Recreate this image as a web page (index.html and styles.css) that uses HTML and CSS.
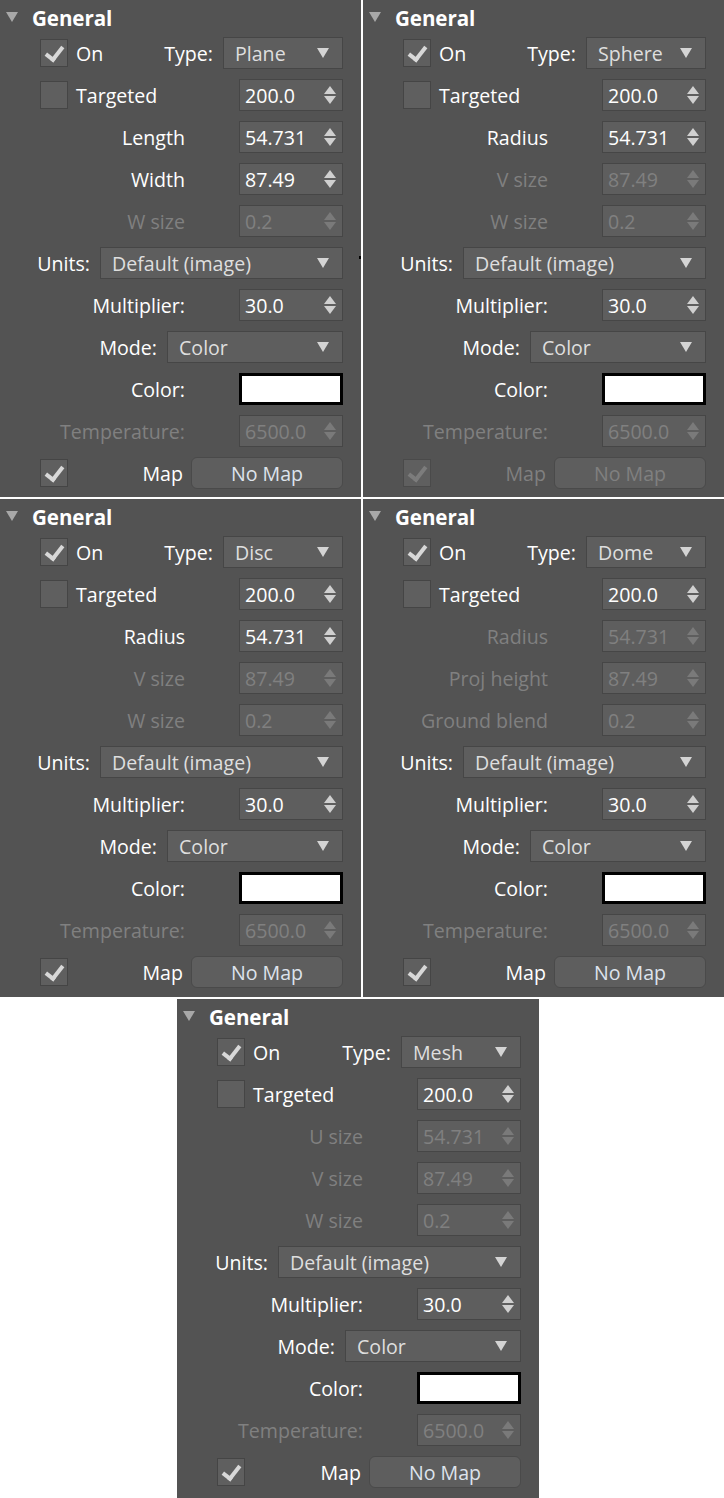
FILE: index.html
```html
<!DOCTYPE html>
<html>
<head>
<meta charset="utf-8">
<link rel="stylesheet" href="styles.css">
</head>
<body>
<div class="sheet">
  <!-- Panel 1: Plane -->
  <section class="panel p1">
    <div class="head"><span class="tri"></span><span class="title">General</span></div>
    <div class="row"><span class="cb on"></span><span class="name">On</span><span class="lbl g-d">Type:</span><span class="dd w-type"><span class="ddt">Plane</span><span class="dda"></span></span></div>
    <div class="row"><span class="cb"></span><span class="name">Targeted</span><span class="sp auto"><span class="spt">200.0</span><span class="spa"></span></span></div>
    <div class="row"><span class="lbl g-s">Length</span><span class="sp"><span class="spt">54.731</span><span class="spa"></span></span></div>
    <div class="row"><span class="lbl g-s">Width</span><span class="sp"><span class="spt">87.49</span><span class="spa"></span></span></div>
    <div class="row dis"><span class="lbl g-s">W size</span><span class="sp"><span class="spt">0.2</span><span class="spa"></span></span></div>
    <div class="row"><span class="lbl g-d">Units:</span><span class="dd w-units"><span class="ddt">Default (image)</span><span class="dda"></span></span></div>
    <div class="row"><span class="lbl g-s">Multiplier:</span><span class="sp"><span class="spt">30.0</span><span class="spa"></span></span></div>
    <div class="row"><span class="lbl g-d">Mode:</span><span class="dd w-mode"><span class="ddt">Color</span><span class="dda"></span></span></div>
    <div class="row"><span class="lbl g-s">Color:</span><span class="sw"></span></div>
    <div class="row dis"><span class="lbl g-s">Temperature:</span><span class="sp"><span class="spt">6500.0</span><span class="spa"></span></span></div>
    <div class="row"><span class="cb on"></span><span class="lbl g-m">Map</span><span class="btn">No Map</span></div>
  </section>

  <!-- Panel 2: Sphere -->
  <section class="panel">
    <div class="head"><span class="tri"></span><span class="title">General</span></div>
    <div class="row"><span class="cb on"></span><span class="name">On</span><span class="lbl g-d">Type:</span><span class="dd w-type"><span class="ddt">Sphere</span><span class="dda"></span></span></div>
    <div class="row"><span class="cb"></span><span class="name">Targeted</span><span class="sp auto"><span class="spt">200.0</span><span class="spa"></span></span></div>
    <div class="row"><span class="lbl g-s">Radius</span><span class="sp"><span class="spt">54.731</span><span class="spa"></span></span></div>
    <div class="row dis"><span class="lbl g-s">V size</span><span class="sp"><span class="spt">87.49</span><span class="spa"></span></span></div>
    <div class="row dis"><span class="lbl g-s">W size</span><span class="sp"><span class="spt">0.2</span><span class="spa"></span></span></div>
    <div class="row"><span class="lbl g-d">Units:</span><span class="dd w-units"><span class="ddt">Default (image)</span><span class="dda"></span></span></div>
    <div class="row"><span class="lbl g-s">Multiplier:</span><span class="sp"><span class="spt">30.0</span><span class="spa"></span></span></div>
    <div class="row"><span class="lbl g-d">Mode:</span><span class="dd w-mode"><span class="ddt">Color</span><span class="dda"></span></span></div>
    <div class="row"><span class="lbl g-s">Color:</span><span class="sw"></span></div>
    <div class="row dis"><span class="lbl g-s">Temperature:</span><span class="sp"><span class="spt">6500.0</span><span class="spa"></span></span></div>
    <div class="row dis"><span class="cb on"></span><span class="lbl g-m">Map</span><span class="btn">No Map</span></div>
  </section>

  <!-- Panel 3: Disc -->
  <section class="panel">
    <div class="head"><span class="tri"></span><span class="title">General</span></div>
    <div class="row"><span class="cb on"></span><span class="name">On</span><span class="lbl g-d">Type:</span><span class="dd w-type"><span class="ddt">Disc</span><span class="dda"></span></span></div>
    <div class="row"><span class="cb"></span><span class="name">Targeted</span><span class="sp auto"><span class="spt">200.0</span><span class="spa"></span></span></div>
    <div class="row"><span class="lbl g-s">Radius</span><span class="sp"><span class="spt">54.731</span><span class="spa"></span></span></div>
    <div class="row dis"><span class="lbl g-s">V size</span><span class="sp"><span class="spt">87.49</span><span class="spa"></span></span></div>
    <div class="row dis"><span class="lbl g-s">W size</span><span class="sp"><span class="spt">0.2</span><span class="spa"></span></span></div>
    <div class="row"><span class="lbl g-d">Units:</span><span class="dd w-units"><span class="ddt">Default (image)</span><span class="dda"></span></span></div>
    <div class="row"><span class="lbl g-s">Multiplier:</span><span class="sp"><span class="spt">30.0</span><span class="spa"></span></span></div>
    <div class="row"><span class="lbl g-d">Mode:</span><span class="dd w-mode"><span class="ddt">Color</span><span class="dda"></span></span></div>
    <div class="row"><span class="lbl g-s">Color:</span><span class="sw"></span></div>
    <div class="row dis"><span class="lbl g-s">Temperature:</span><span class="sp"><span class="spt">6500.0</span><span class="spa"></span></span></div>
    <div class="row"><span class="cb on"></span><span class="lbl g-m">Map</span><span class="btn">No Map</span></div>
  </section>

  <!-- Panel 4: Dome -->
  <section class="panel">
    <div class="head"><span class="tri"></span><span class="title">General</span></div>
    <div class="row"><span class="cb on"></span><span class="name">On</span><span class="lbl g-d">Type:</span><span class="dd w-type"><span class="ddt">Dome</span><span class="dda"></span></span></div>
    <div class="row"><span class="cb"></span><span class="name">Targeted</span><span class="sp auto"><span class="spt">200.0</span><span class="spa"></span></span></div>
    <div class="row dis"><span class="lbl g-s">Radius</span><span class="sp"><span class="spt">54.731</span><span class="spa"></span></span></div>
    <div class="row dis"><span class="lbl g-s">Proj height</span><span class="sp"><span class="spt">87.49</span><span class="spa"></span></span></div>
    <div class="row dis"><span class="lbl g-s">Ground blend</span><span class="sp"><span class="spt">0.2</span><span class="spa"></span></span></div>
    <div class="row"><span class="lbl g-d">Units:</span><span class="dd w-units"><span class="ddt">Default (image)</span><span class="dda"></span></span></div>
    <div class="row"><span class="lbl g-s">Multiplier:</span><span class="sp"><span class="spt">30.0</span><span class="spa"></span></span></div>
    <div class="row"><span class="lbl g-d">Mode:</span><span class="dd w-mode"><span class="ddt">Color</span><span class="dda"></span></span></div>
    <div class="row"><span class="lbl g-s">Color:</span><span class="sw"></span></div>
    <div class="row dis"><span class="lbl g-s">Temperature:</span><span class="sp"><span class="spt">6500.0</span><span class="spa"></span></span></div>
    <div class="row"><span class="cb on"></span><span class="lbl g-m">Map</span><span class="btn">No Map</span></div>
  </section>

  <!-- Panel 5: Mesh -->
  <section class="panel p5">
    <div class="head"><span class="tri"></span><span class="title">General</span></div>
    <div class="row"><span class="cb on"></span><span class="name">On</span><span class="lbl g-d">Type:</span><span class="dd w-type"><span class="ddt">Mesh</span><span class="dda"></span></span></div>
    <div class="row"><span class="cb"></span><span class="name">Targeted</span><span class="sp auto"><span class="spt">200.0</span><span class="spa"></span></span></div>
    <div class="row dis"><span class="lbl g-s">U size</span><span class="sp"><span class="spt">54.731</span><span class="spa"></span></span></div>
    <div class="row dis"><span class="lbl g-s">V size</span><span class="sp"><span class="spt">87.49</span><span class="spa"></span></span></div>
    <div class="row dis"><span class="lbl g-s">W size</span><span class="sp"><span class="spt">0.2</span><span class="spa"></span></span></div>
    <div class="row"><span class="lbl g-d">Units:</span><span class="dd w-units"><span class="ddt">Default (image)</span><span class="dda"></span></span></div>
    <div class="row"><span class="lbl g-s">Multiplier:</span><span class="sp"><span class="spt">30.0</span><span class="spa"></span></span></div>
    <div class="row"><span class="lbl g-d">Mode:</span><span class="dd w-mode"><span class="ddt">Color</span><span class="dda"></span></span></div>
    <div class="row"><span class="lbl g-s">Color:</span><span class="sw"></span></div>
    <div class="row dis"><span class="lbl g-s">Temperature:</span><span class="sp"><span class="spt">6500.0</span><span class="spa"></span></span></div>
    <div class="row"><span class="cb on"></span><span class="lbl g-m">Map</span><span class="btn">No Map</span></div>
  </section>
</div>
</body>
</html>
```
FILE: styles.css
```css
* { box-sizing: border-box; }
html, body { margin: 0; padding: 0; background: #ffffff; }
body {
  font-family: "Open Sans", "Noto Sans", "DejaVu Sans", sans-serif;
  font-size: 19.6px;
  color: #ffffff;
}
.sheet {
  display: grid;
  grid-template-columns: 361px 361px;
  grid-template-rows: 497px 498px 499px;
  column-gap: 2px;
  row-gap: 2px;
  width: 724px;
}
.panel {
  background: #535353;
  position: relative;
  overflow: hidden;
}
.p1::after {
  content: "";
  position: absolute;
  right: 0;
  top: 256px;
  width: 2px;
  height: 3px;
  background: #000;
}
.p5 {
  grid-column: 1 / span 2;
  width: 362px;
  margin-left: 177px;
}
.head {
  height: 32px;
  display: flex;
  align-items: center;
  padding-top: 3px;
}
.tri {
  width: 0; height: 0;
  margin-left: 6px;
  border-left: 6px solid transparent;
  border-right: 6px solid transparent;
  border-top: 10px solid #a8a8a8;
  margin-top: -2px;
}
.title {
  margin-left: 14px;
  font-weight: 700;
  font-size: 20.6px;
  letter-spacing: -0.1px;
}
.row {
  height: 42px;
  display: flex;
  align-items: center;
  padding-right: 18px;
}
.cb {
  flex: none;
  width: 28px;
  height: 28px;
  margin-left: 40px;
  background: #5f5f5f;
  border: 1px solid #454545;
  position: relative;
}
.cb.on::after {
  content: "";
  position: absolute;
  left: 8px;
  top: 3px;
  width: 7px;
  height: 14px;
  border-right: 4px solid #d8d8d8;
  border-bottom: 4px solid #d8d8d8;
  transform: rotate(38deg);
  transform-origin: center;
}
.name { margin-left: 8px; }
.lbl { margin-left: auto; white-space: nowrap; }
.g-s { margin-right: 54px; }
.g-d { margin-right: 10px; }
.g-m { margin-right: 8px; }
.auto { margin-left: auto; }

.dd, .sp {
  flex: none;
  height: 32px;
  background: #5e5e5e;
  border: 1px solid #464646;
  display: flex;
  align-items: center;
  position: relative;
}
.w-type { width: 120px; }
.w-units { width: 243px; }
.w-mode { width: 176px; }
.ddt { padding-left: 11px; color: #dedede; white-space: nowrap; }
.dda {
  margin-left: auto;
  margin-right: 13px;
  width: 0; height: 0;
  border-left: 6px solid transparent;
  border-right: 6px solid transparent;
  border-top: 10px solid #d4d4d4;
}
.sp { width: 104px; }
.spt { padding-left: 5px; color: #ffffff; }
.spa {
  margin-left: auto;
  margin-right: 6px;
  width: 12px;
  height: 20px;
  position: relative;
}
.spa::before, .spa::after {
  content: "";
  position: absolute;
  left: 0;
  width: 0; height: 0;
  border-left: 6px solid transparent;
  border-right: 6px solid transparent;
}
.spa::before { top: 1px; border-bottom: 8px solid #d0d0d0; }
.spa::after { bottom: 1px; border-top: 8px solid #d0d0d0; }

.sw {
  flex: none;
  width: 104px;
  height: 32px;
  background: #ffffff;
  border: 3px solid #000000;
}
.btn {
  flex: none;
  width: 152px;
  height: 32px;
  background: #5e5e5e;
  border: 1px solid #4a4a4a;
  border-radius: 6px;
  display: flex;
  align-items: center;
  justify-content: center;
  color: #dde3ec;
}

/* disabled */
.dis .lbl, .dis .spt, .dis .btn { color: #808080; }
.dis .spa::before { border-bottom-color: #7a7a7a; }
.dis .spa::after { border-top-color: #7a7a7a; }
.dis .cb.on::after { border-color: #7c7c7c; }
.dis .cb { border-color: #4a4a4a; }
```
